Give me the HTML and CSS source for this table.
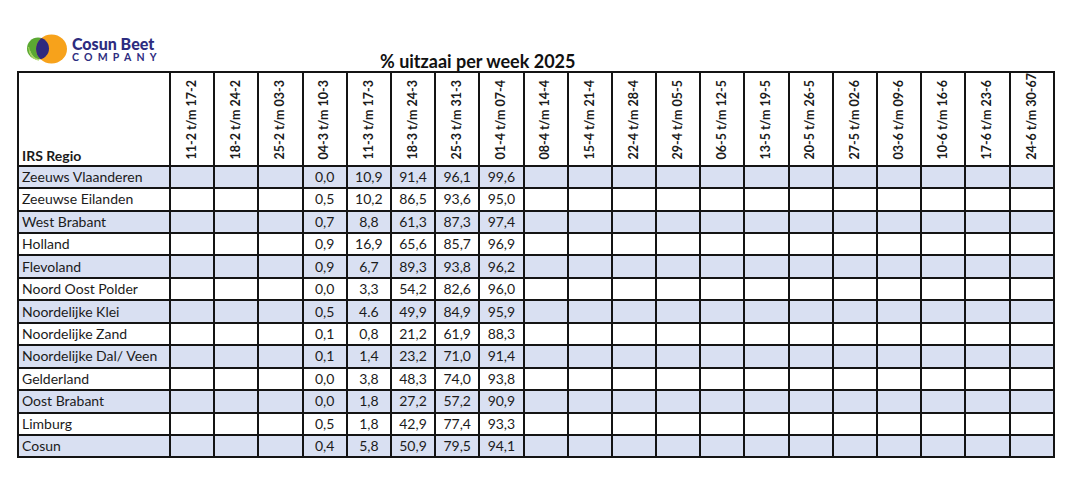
FILE: index.html
```html
<!DOCTYPE html>
<html lang="nl">
<head>
<meta charset="utf-8">
<title>% uitzaai per week 2025</title>
<link rel="stylesheet" href="styles.css">
</head>
<body>
<div class="page">
  <div class="top">
    <div class="brand">
      <svg class="brand-mark" viewBox="0 0 42 30" width="42" height="30" aria-hidden="true">
        <defs>
          <clipPath id="orangeClip"><ellipse cx="25.5" cy="15" rx="15.5" ry="14.5"/></clipPath>
        </defs>
        <circle cx="12" cy="14.5" r="11" fill="#5aa832"/>
        <path d="M3.5 17 Q6 25 13 26" fill="none" stroke="#b7dc7a" stroke-width="1.6"/>
        <path d="M2.5 13 Q4 22 10 25" fill="none" stroke="#9fd05a" stroke-width="1.2"/>
        <ellipse cx="25.5" cy="15" rx="15.5" ry="14.5" fill="#f7a21b"/>
        <circle cx="12" cy="14.5" r="11" fill="#2f2a7e" clip-path="url(#orangeClip)"/>
      </svg>
      <div class="brand-text">
        <span class="brand-name">Cosun Beet</span>
        <span class="brand-sub">COMPANY</span>
      </div>
    </div>
    <h1 class="title">% uitzaai per week 2025</h1>
  </div>

  <table class="grid">
    <colgroup>
      <col class="col-region">
      <col span="20">
    </colgroup>
    <thead>
      <tr>
        <th class="h-region">IRS Regio</th>
        <th><span class="vlabel">11-2 t/m 17-2</span></th>
        <th><span class="vlabel">18-2 t/m 24-2</span></th>
        <th><span class="vlabel">25-2 t/m 03-3</span></th>
        <th><span class="vlabel">04-3 t/m 10-3</span></th>
        <th><span class="vlabel">11-3 t/m 17-3</span></th>
        <th><span class="vlabel">18-3 t/m 24-3</span></th>
        <th><span class="vlabel">25-3 t/m 31-3</span></th>
        <th><span class="vlabel">01-4 t/m 07-4</span></th>
        <th><span class="vlabel">08-4 t/m 14-4</span></th>
        <th><span class="vlabel">15-4 t/m 21-4</span></th>
        <th><span class="vlabel">22-4 t/m 28-4</span></th>
        <th><span class="vlabel">29-4 t/m 05-5</span></th>
        <th><span class="vlabel">06-5 t/m 12-5</span></th>
        <th><span class="vlabel">13-5 t/m 19-5</span></th>
        <th><span class="vlabel">20-5 t/m 26-5</span></th>
        <th><span class="vlabel">27-5 t/m 02-6</span></th>
        <th><span class="vlabel">03-6 t/m 09-6</span></th>
        <th><span class="vlabel">10-6 t/m 16-6</span></th>
        <th><span class="vlabel">17-6 t/m 23-6</span></th>
        <th><span class="vlabel">24-6 t/m 30-67</span></th>
      </tr>
    </thead>
    <tbody>
      <tr class="band"><td class="region">Zeeuws Vlaanderen</td><td></td><td></td><td></td><td>0,0</td><td>10,9</td><td>91,4</td><td>96,1</td><td>99,6</td><td></td><td></td><td></td><td></td><td></td><td></td><td></td><td></td><td></td><td></td><td></td><td></td></tr>
      <tr><td class="region">Zeeuwse Eilanden</td><td></td><td></td><td></td><td>0,5</td><td>10,2</td><td>86,5</td><td>93,6</td><td>95,0</td><td></td><td></td><td></td><td></td><td></td><td></td><td></td><td></td><td></td><td></td><td></td><td></td></tr>
      <tr class="band"><td class="region">West Brabant</td><td></td><td></td><td></td><td>0,7</td><td>8,8</td><td>61,3</td><td>87,3</td><td>97,4</td><td></td><td></td><td></td><td></td><td></td><td></td><td></td><td></td><td></td><td></td><td></td><td></td></tr>
      <tr><td class="region">Holland</td><td></td><td></td><td></td><td>0,9</td><td>16,9</td><td>65,6</td><td>85,7</td><td>96,9</td><td></td><td></td><td></td><td></td><td></td><td></td><td></td><td></td><td></td><td></td><td></td><td></td></tr>
      <tr class="band"><td class="region">Flevoland</td><td></td><td></td><td></td><td>0,9</td><td>6,7</td><td>89,3</td><td>93,8</td><td>96,2</td><td></td><td></td><td></td><td></td><td></td><td></td><td></td><td></td><td></td><td></td><td></td><td></td></tr>
      <tr><td class="region">Noord Oost Polder</td><td></td><td></td><td></td><td>0,0</td><td>3,3</td><td>54,2</td><td>82,6</td><td>96,0</td><td></td><td></td><td></td><td></td><td></td><td></td><td></td><td></td><td></td><td></td><td></td><td></td></tr>
      <tr class="band"><td class="region">Noordelijke Klei</td><td></td><td></td><td></td><td>0,5</td><td>4.6</td><td>49,9</td><td>84,9</td><td>95,9</td><td></td><td></td><td></td><td></td><td></td><td></td><td></td><td></td><td></td><td></td><td></td><td></td></tr>
      <tr><td class="region">Noordelijke Zand</td><td></td><td></td><td></td><td>0,1</td><td>0,8</td><td>21,2</td><td>61,9</td><td>88,3</td><td></td><td></td><td></td><td></td><td></td><td></td><td></td><td></td><td></td><td></td><td></td><td></td></tr>
      <tr class="band"><td class="region">Noordelijke Dal/ Veen</td><td></td><td></td><td></td><td>0,1</td><td>1,4</td><td>23,2</td><td>71,0</td><td>91,4</td><td></td><td></td><td></td><td></td><td></td><td></td><td></td><td></td><td></td><td></td><td></td><td></td></tr>
      <tr><td class="region">Gelderland</td><td></td><td></td><td></td><td>0,0</td><td>3,8</td><td>48,3</td><td>74,0</td><td>93,8</td><td></td><td></td><td></td><td></td><td></td><td></td><td></td><td></td><td></td><td></td><td></td><td></td></tr>
      <tr class="band"><td class="region">Oost Brabant</td><td></td><td></td><td></td><td>0,0</td><td>1,8</td><td>27,2</td><td>57,2</td><td>90,9</td><td></td><td></td><td></td><td></td><td></td><td></td><td></td><td></td><td></td><td></td><td></td><td></td></tr>
      <tr><td class="region">Limburg</td><td></td><td></td><td></td><td>0,5</td><td>1,8</td><td>42,9</td><td>77,4</td><td>93,3</td><td></td><td></td><td></td><td></td><td></td><td></td><td></td><td></td><td></td><td></td><td></td><td></td></tr>
      <tr class="band"><td class="region">Cosun</td><td></td><td></td><td></td><td>0,4</td><td>5,8</td><td>50,9</td><td>79,5</td><td>94,1</td><td></td><td></td><td></td><td></td><td></td><td></td><td></td><td></td><td></td><td></td><td></td><td></td></tr>
    </tbody>
  </table>
</div>
</body>
</html>
```

FILE: styles.css
```css
html, body {
  margin: 0;
  padding: 0;
  background: #ffffff;
}

body {
  font-family: Lato, "Liberation Sans", sans-serif;
  color: #1b1b1b;
}

.page {
  padding: 34px 0 0 17px;
}

.top {
  display: flex;
  align-items: flex-end;
  height: 37px;
}

.brand {
  align-self: flex-start;
  display: flex;
  align-items: center;
  gap: 4px;
  margin-left: 9px;
  width: 140px;
}

.brand-mark {
  display: block;
  flex: none;
}

.brand-text {
  display: flex;
  flex-direction: column;
  color: #2d2c80;
}

.brand-name {
  font-family: Lato, "Noto Sans", sans-serif;
  font-weight: 900;
  font-size: 16px;
  line-height: 15px;
  letter-spacing: 0;
}

.brand-sub {
  font-family: Lato, "Noto Sans", sans-serif;
  font-weight: 700;
  font-size: 10.5px;
  line-height: 12px;
  letter-spacing: 5.2px;
  white-space: nowrap;
}

.title {
  margin: 0 0 0 214px;
  font-size: 18px;
  font-weight: 700;
  line-height: 20px;
  color: #111;
}

.grid {
  border-collapse: collapse;
  table-layout: fixed;
  width: 1038px;
  font-size: 14px;
}

.col-region {
  width: 152px;
}

.grid th,
.grid td {
  border: 2px solid #141414;
  padding: 0;
}

.grid thead tr {
  height: 93px;
}

.grid thead th {
  vertical-align: bottom;
  text-align: center;
  padding-bottom: 2px;
  font-weight: 700;
  font-size: 12.5px;
}

.grid thead th.h-region {
  text-align: left;
  padding-left: 3px;
  padding-bottom: 0;
  line-height: 18px;
  font-size: 14px;
}

.vlabel {
  display: inline-block;
  writing-mode: vertical-rl;
  transform: rotate(180deg);
  white-space: nowrap;
  line-height: 1;
}

.grid tbody tr {
  height: 22.45px;
}

.grid tbody td {
  text-align: center;
  line-height: 18px;
}

.grid tbody td.region {
  text-align: left;
  padding-left: 3px;
  white-space: nowrap;
}

.grid tbody tr.band td {
  background: #d9e0f2;
}
```
